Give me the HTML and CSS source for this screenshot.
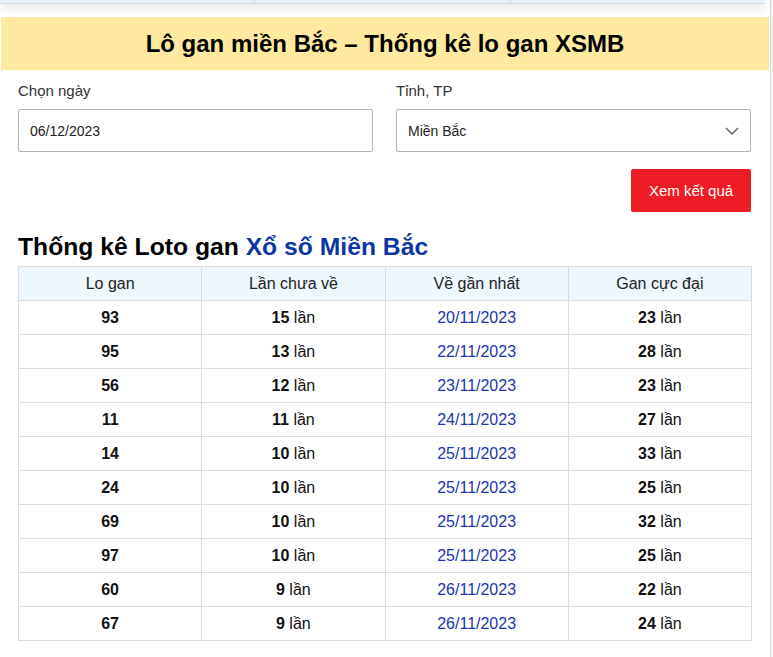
FILE: index.html
```html
<!DOCTYPE html>
<html lang="vi">
<head>
<meta charset="utf-8">
<title>Lô gan miền Bắc</title>
<link rel="stylesheet" href="styles.css">
</head>
<body>
<div class="page">
  <div class="topnav">
    <div class="navcell"></div>
    <div class="navcell"></div>
    <div class="navcell"></div>
  </div>
  <h1 class="banner">Lô gan miền Bắc – Thống kê lo gan XSMB</h1>
  <form class="filter">
    <div class="field">
      <label class="label">Chọn ngày</label>
      <div class="input">06/12/2023</div>
    </div>
    <div class="field">
      <label class="label">Tỉnh, TP</label>
      <div class="input select">Miền Bắc
        <svg class="chev" width="14" height="8" viewBox="0 0 14 8"><path d="M1 1l6 6 6-6" fill="none" stroke="#666" stroke-width="1.5"/></svg>
      </div>
    </div>
    <div class="actions"><button type="button" class="btn">Xem kết quả</button></div>
  </form>
  <h2 class="title">Thống kê Loto gan <span class="blue">Xổ số Miền Bắc</span></h2>
  <table class="stats">
    <thead>
      <tr><th>Lo gan</th><th>Lần chưa về</th><th>Về gần nhất</th><th>Gan cực đại</th></tr>
    </thead>
    <tbody>
      <tr><td><b>93</b></td><td><b>15</b> lần</td><td class="date">20/11/2023</td><td><b>23</b> lần</td></tr>
      <tr><td><b>95</b></td><td><b>13</b> lần</td><td class="date">22/11/2023</td><td><b>28</b> lần</td></tr>
      <tr><td><b>56</b></td><td><b>12</b> lần</td><td class="date">23/11/2023</td><td><b>23</b> lần</td></tr>
      <tr><td><b>11</b></td><td><b>11</b> lần</td><td class="date">24/11/2023</td><td><b>27</b> lần</td></tr>
      <tr><td><b>14</b></td><td><b>10</b> lần</td><td class="date">25/11/2023</td><td><b>33</b> lần</td></tr>
      <tr><td><b>24</b></td><td><b>10</b> lần</td><td class="date">25/11/2023</td><td><b>25</b> lần</td></tr>
      <tr><td><b>69</b></td><td><b>10</b> lần</td><td class="date">25/11/2023</td><td><b>32</b> lần</td></tr>
      <tr><td><b>97</b></td><td><b>10</b> lần</td><td class="date">25/11/2023</td><td><b>25</b> lần</td></tr>
      <tr><td><b>60</b></td><td><b>9</b> lần</td><td class="date">26/11/2023</td><td><b>22</b> lần</td></tr>
      <tr><td><b>67</b></td><td><b>9</b> lần</td><td class="date">26/11/2023</td><td><b>24</b> lần</td></tr>
    </tbody>
  </table>
</div>
<div class="scroll"></div>
</body>
</html>
```
FILE: styles.css
```css
html, body { margin: 0; padding: 0; }
body {
  display: flex;
  min-height: 657px;
  font-family: "Liberation Sans", Arial, sans-serif;
  color: #000;
  background: #fff;
  overflow: hidden;
}
.page { width: 770px; flex: none; }
.scroll {
  flex: 1;
  background: #f0f0f0;
  border-left: 1px solid #dadada;
}
.topnav {
  height: 3px;
  display: flex;
  background: #e8f1fb;
  box-shadow: 0 3px 8px rgba(0,0,0,0.18);
  border-bottom: 1px solid #d4dbe4;
  margin-right: 5px;
}
.navcell { flex: 1; border-right: 1px solid #c9d6e6; }
.navcell:last-child { border-right: none; }
.banner {
  margin: 13px 1px 0 1px;
  height: 53px;
  background: #ffe99f;
  font-size: 24px;
  font-weight: bold;
  display: flex;
  align-items: center;
  justify-content: center;
  color: #000;
}
.filter {
  padding: 12px 18px 0 18px;
  margin-right: 1px;
  display: grid;
  grid-template-columns: 1fr 1fr;
  column-gap: 23px;
}
.label {
  display: block;
  font-size: 15px;
  line-height: 18px;
  color: #333;
  margin-bottom: 9px;
}
.input {
  height: 41px;
  border: 1px solid #b3b3b3;
  border-radius: 2px;
  padding: 0 11px;
  display: flex;
  align-items: center;
  font-size: 14px;
  color: #222;
}
.select { justify-content: space-between; }
.chev { margin-right: 0; }
.actions {
  grid-column: 1 / 3;
  display: flex;
  justify-content: flex-end;
  padding-top: 17px;
}
.btn {
  width: 120px;
  height: 43px;
  background: #ee1c25;
  color: #fff;
  border: none;
  border-radius: 2px;
  font-family: "Liberation Sans", Arial, sans-serif;
  font-size: 15px;
}
.title {
  margin: 21px 0 5px 18px;
  font-size: 24.7px;
  line-height: 28px;
  font-weight: bold;
}
.blue { color: #0c35a8; }
.stats {
  margin-left: 18px;
  width: 734px;
  border-collapse: collapse;
  table-layout: fixed;
  font-size: 16px;
}
.stats th, .stats td {
  border: 1px solid #dcdcdc;
  height: 33px;
  padding: 0;
  text-align: center;
}
.stats th {
  background: #eef6fe;
  font-weight: normal;
  color: #222;
}
.stats td { color: #111; }
.stats td.date { color: #1c34b0; }
```
